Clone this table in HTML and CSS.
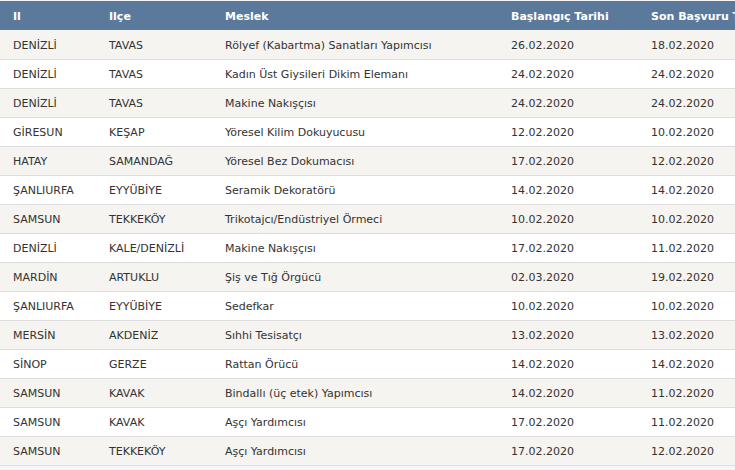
FILE: index.html
```html
<!DOCTYPE html>
<html lang="tr">
<head>
<meta charset="utf-8">
<link rel="stylesheet" href="styles.css">
</head>
<body>
<div class="wrap">
<table class="grid">
<thead>
<tr><th class="c1">Il</th><th class="c2">Ilçe</th><th class="c3">Meslek</th><th class="c4">Başlangıç Tarihi</th><th class="c5">Son Başvuru Tarihi</th></tr>
</thead>
<tbody>
<tr><td>DENİZLİ</td><td>TAVAS</td><td>Rölyef (Kabartma) Sanatları Yapımcısı</td><td>26.02.2020</td><td>18.02.2020</td></tr>
<tr><td>DENİZLİ</td><td>TAVAS</td><td>Kadın Üst Giysileri Dikim Elemanı</td><td>24.02.2020</td><td>24.02.2020</td></tr>
<tr><td>DENİZLİ</td><td>TAVAS</td><td>Makine Nakışçısı</td><td>24.02.2020</td><td>24.02.2020</td></tr>
<tr><td>GİRESUN</td><td>KEŞAP</td><td>Yöresel Kilim Dokuyucusu</td><td>12.02.2020</td><td>10.02.2020</td></tr>
<tr><td>HATAY</td><td>SAMANDAĞ</td><td>Yöresel Bez Dokumacısı</td><td>17.02.2020</td><td>12.02.2020</td></tr>
<tr><td>ŞANLIURFA</td><td>EYYÜBİYE</td><td>Seramik Dekoratörü</td><td>14.02.2020</td><td>14.02.2020</td></tr>
<tr><td>SAMSUN</td><td>TEKKEKÖY</td><td>Trikotajcı/Endüstriyel Örmeci</td><td>10.02.2020</td><td>10.02.2020</td></tr>
<tr><td>DENİZLİ</td><td>KALE/DENİZLİ</td><td>Makine Nakışçısı</td><td>17.02.2020</td><td>11.02.2020</td></tr>
<tr><td>MARDİN</td><td>ARTUKLU</td><td>Şiş ve Tığ Örgücü</td><td>02.03.2020</td><td>19.02.2020</td></tr>
<tr><td>ŞANLIURFA</td><td>EYYÜBİYE</td><td>Sedefkar</td><td>10.02.2020</td><td>10.02.2020</td></tr>
<tr><td>MERSİN</td><td>AKDENİZ</td><td>Sıhhi Tesisatçı</td><td>13.02.2020</td><td>13.02.2020</td></tr>
<tr><td>SİNOP</td><td>GERZE</td><td>Rattan Örücü</td><td>14.02.2020</td><td>14.02.2020</td></tr>
<tr><td>SAMSUN</td><td>KAVAK</td><td>Bindallı (üç etek) Yapımcısı</td><td>14.02.2020</td><td>11.02.2020</td></tr>
<tr><td>SAMSUN</td><td>KAVAK</td><td>Aşçı Yardımcısı</td><td>17.02.2020</td><td>11.02.2020</td></tr>
<tr><td>SAMSUN</td><td>TEKKEKÖY</td><td>Aşçı Yardımcısı</td><td>17.02.2020</td><td>12.02.2020</td></tr>
</tbody>
</table>
</div>
</body>
</html>
```
FILE: styles.css
```css
html, body {
  margin: 0;
  padding: 0;
  background: #f6f6f8;
  overflow: hidden;
}
.wrap {
  padding-top: 1px;
  width: 800px;
}
.grid {
  border-collapse: collapse;
  table-layout: fixed;
  width: 800px;
  font-family: "DejaVu Sans", Verdana, sans-serif;
  font-size: 11px;
  color: #333;
}
.grid th {
  background: #5b7a9b;
  color: #fff;
  font-weight: bold;
  text-align: left;
  height: 29px;
  padding: 2px 0 0 13px;
  box-sizing: border-box;
}
.c1 { width: 96px; }
.c2 { width: 116px; }
.c3 { width: 286px; }
.c4 { width: 140px; }
.grid td {
  height: 29px;
  padding: 2px 0 0 13px;
  box-sizing: border-box;
  border-bottom: 1px solid #dddddd;
  white-space: nowrap;
}
.grid tbody tr:nth-child(odd) td { background: #f5f4f0; }
.grid tbody tr:nth-child(even) td { background: #ffffff; }
```
